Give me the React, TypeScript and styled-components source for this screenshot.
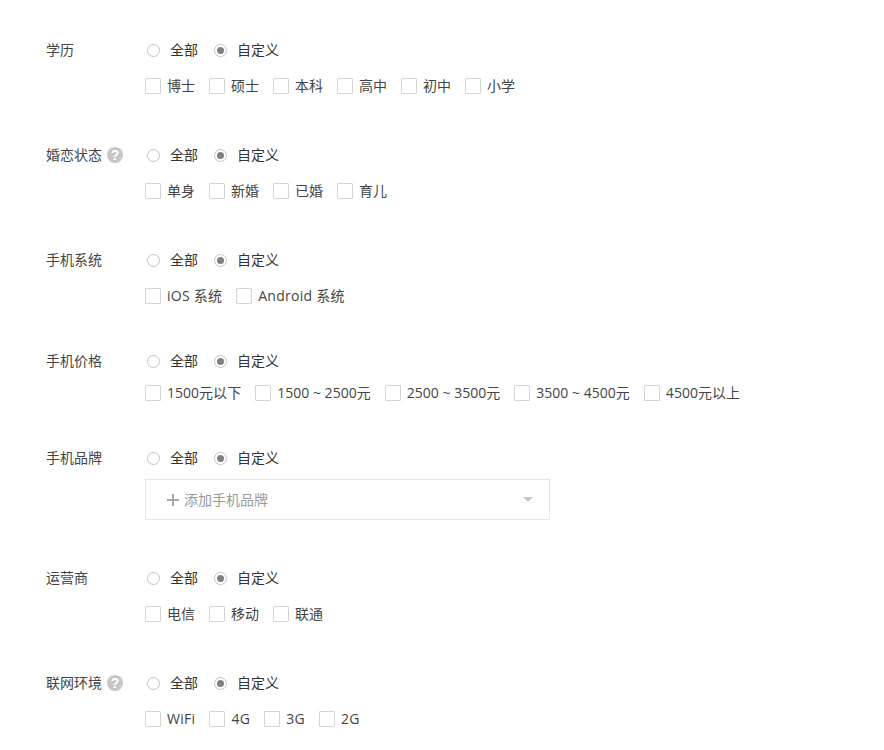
import React from "react";
import styled, { createGlobalStyle } from "styled-components";

const Global = createGlobalStyle`
  html, body { margin: 0; padding: 0; background: #fff; }
  body { font-family: "Open Sans", "Noto Sans CJK SC", sans-serif; font-size: 14px; line-height: 20px; color: #333; }
`;

const Page = styled.div`
  width: 884px;
  height: 750px;
  overflow: hidden;
  padding: 36px 0 0 46px;
  box-sizing: border-box;
`;

const Section = styled.section<{ $gap: number }>`
  display: flex;
  margin-bottom: ${(p) => p.$gap}px;
`;

const Label = styled.div`
  width: 99px;
  height: 28px;
  display: flex;
  align-items: center;
  gap: 5px;
  color: #444;
`;

const Help = styled.span`
  width: 16px;
  height: 16px;
  border-radius: 50%;
  background: #c6c6c6;
  color: #fff;
  font-size: 14px;
  font-weight: 700;
  line-height: 16px;
  text-align: center;
  font-family: "Liberation Sans", sans-serif;
`;

const Body = styled.div`
  display: flex;
  flex-direction: column;
`;

const RadioLine = styled.div`
  height: 28px;
  display: flex;
  align-items: center;
  padding-left: 2px;
  gap: 16px;
`;

const RadioItem = styled.label`
  display: flex;
  align-items: center;
  gap: 10px;
`;

const RadioDot = styled.span<{ $on?: boolean }>`
  width: 13px;
  height: 13px;
  box-sizing: border-box;
  border: 1px solid #c4c4c4;
  border-radius: 50%;
  display: flex;
  align-items: center;
  justify-content: center;
  &::after {
    content: "";
    display: ${(p) => (p.$on ? "block" : "none")};
    width: 7px;
    height: 7px;
    border-radius: 50%;
    background: #808080;
  }
`;

const CheckLine = styled.div<{ $top: number; $track: number }>`
  height: 28px;
  margin-top: ${(p) => p.$top}px;
  display: flex;
  align-items: center;
  gap: 14px;
  letter-spacing: ${(p) => p.$track}px;
`;

const CheckItem = styled.label`
  display: flex;
  align-items: center;
  gap: 6px;
  color: #444;
`;

const Box = styled.span`
  width: 16px;
  height: 16px;
  box-sizing: border-box;
  border: 1px solid #d4d4d4;
  border-radius: 1px;
`;

const Select = styled.div`
  width: 405px;
  height: 41px;
  margin-top: 7px;
  box-sizing: border-box;
  border: 1px solid #e6e6e6;
  display: flex;
  align-items: center;
  padding: 0 16px 0 20px;
  color: #999;
`;

const Plus = styled.svg`
  width: 14px;
  height: 14px;
  margin-right: 4px;
`;

const Placeholder = styled.span`
  flex: 1;
`;

const Caret = styled.span`
  width: 0;
  height: 0;
  border-left: 5px solid transparent;
  border-right: 5px solid transparent;
  border-top: 5px solid #c8c8c8;
`;

type Row = {
  label: string;
  help?: boolean;
  options?: string[];
  top?: number;
  track?: number;
  select?: string;
  gap: number;
};

const rows: Row[] = [
  { label: "学历", options: ["博士", "硕士", "本科", "高中", "初中", "小学"], gap: 41 },
  { label: "婚恋状态", help: true, options: ["单身", "新婚", "已婚", "育儿"], gap: 41 },
  { label: "手机系统", options: ["iOS 系统", "Android 系统"], track: 0.25, gap: 37 },
  {
    label: "手机价格",
    options: ["1500元以下", "1500 ~ 2500元", "2500 ~ 3500元", "3500 ~ 4500元", "4500元以上"],
    top: 4,
    track: 0.02,
    gap: 37,
  },
  { label: "手机品牌", select: "添加手机品牌", gap: 44 },
  { label: "运营商", options: ["电信", "移动", "联通"], gap: 41 },
  { label: "联网环境", help: true, options: ["WiFi", "4G", "3G", "2G"], track: 0.3, gap: 0 },
];

export default function App() {
  return (
    <Page>
      <Global />
      {rows.map((r) => (
        <Section key={r.label} $gap={r.gap}>
          <Label>
            {r.label}
            {r.help && <Help>?</Help>}
          </Label>
          <Body>
            <RadioLine>
              <RadioItem>
                <RadioDot />
                全部
              </RadioItem>
              <RadioItem>
                <RadioDot $on />
                自定义
              </RadioItem>
            </RadioLine>
            {r.options && (
              <CheckLine $top={r.top ?? 8} $track={r.track ?? 0}>
                {r.options.map((o) => (
                  <CheckItem key={o}>
                    <Box />
                    {o}
                  </CheckItem>
                ))}
              </CheckLine>
            )}
            {r.select && (
              <Select>
                <Plus viewBox="0 0 14 14">
                  <path d="M7 1v12M1 7h12" stroke="#aaa" strokeWidth="2" fill="none" />
                </Plus>
                <Placeholder>{r.select}</Placeholder>
                <Caret />
              </Select>
            )}
          </Body>
        </Section>
      ))}
    </Page>
  );
}
